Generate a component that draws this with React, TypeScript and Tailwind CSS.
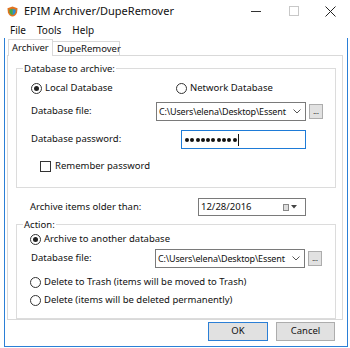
const font = "font-['Noto_Sans','DejaVu_Sans',sans-serif]";

const Radio = ({ checked, label }: { checked?: boolean; label: string }) => (
  <div className="flex items-center h-[14px]">
    <span className="w-[11px] h-[11px] rounded-full border border-[#333] flex items-center justify-center bg-white">
      {checked && <span className="w-[5px] h-[5px] rounded-full bg-[#222]" />}
    </span>
    <span className="ml-[3px] whitespace-nowrap">{label}</span>
  </div>
);

const Combo = () => (
  <div className="flex items-center">
    <div className="w-[150px] h-[19px] border border-[#7a7a7a] bg-white flex items-center pl-[2px] pr-[4px]">
      <span className="flex-1 whitespace-nowrap text-[9px] tracking-[-0.15px]">C:\Users\elena\Desktop\Essent</span>
      <svg width="8" height="5" viewBox="0 0 8 5" className="ml-[2px] shrink-0">
        <path d="M0.5 0.5 L4 4 L7.5 0.5" fill="none" stroke="#555" strokeWidth="1" />
      </svg>
    </div>
    <div className="ml-[3px] w-[14px] h-[15px] border border-[#adadad] bg-[#e1e1e1] flex items-end justify-center pb-[3px]">
      <span className="text-[7px] leading-none">...</span>
    </div>
  </div>
);

const Group = ({ label, children, className }: { label: string; children: React.ReactNode; className?: string }) => (
  <fieldset className={`border border-[#dcdcdc] ml-[8px] w-[320px] ${className ?? ""}`}>
    <legend className="ml-[6px] px-[1px] leading-[13px]">{label}</legend>
    {children}
  </fieldset>
);

const dots = [0, 1, 2, 3, 4, 5, 6, 7, 8, 9];

export default function App() {
  return (
    <div className={`w-[350px] h-[348px] bg-white text-[9.5px] text-[#111] flex flex-col overflow-hidden ${font}`}>
      {/* title bar */}
      <div className="h-[22px] flex items-center">
        <svg width="11" height="11" viewBox="0 0 12 12" className="ml-[7px]">
          <path d="M6 0.5 L11.5 2.5 L11 7 C10 10 8 11 6 11.5 C4 11 2 10 1 7 L0.5 2.5 Z" fill="#e2731f" />
          <path d="M6 3 L9.5 4.2 L9.2 7 C8.5 8.8 7.3 9.5 6 9.8 Z" fill="#2a8fd6" />
          <path d="M6 3 L2.5 4.2 L2.8 7 C3.5 8.8 4.7 9.5 6 9.8 Z" fill="#3cab4a" />
        </svg>
        <span className="ml-[6px] text-[11px]">EPIM Archiver/DupeRemover</span>
        <div className="ml-auto flex items-center">
          <div className="w-[10px] h-[1px] bg-[#333] mr-[28px]" />
          <div className="w-[10px] h-[10px] border border-[#c8c8c8] mr-[26px]" />
          <svg width="11" height="11" viewBox="0 0 11 11" className="mr-[14px]">
            <path d="M0.5 0.5 L10.5 10.5 M10.5 0.5 L0.5 10.5" stroke="#222" strokeWidth="1" />
          </svg>
        </div>
      </div>
      {/* menu */}
      <div className="h-[16px] flex items-center text-[10px] pl-[10px] gap-[11px]">
        <span>File</span>
        <span>Tools</span>
        <span>Help</span>
      </div>
      {/* window body */}
      <div className="ml-[4px] w-[344px] h-[309px] border-x border-b border-[#2b7fd6] flex flex-col">
        <div className="flex items-end pl-[3px] pt-[2px] h-[18px]">
          <div className="relative z-10 h-[17px] w-[45px] border-x border-t border-[#d9d9d9] bg-white pl-[3px] pt-[1px] leading-[13px]">Archiver</div>
          <div className="h-[15px] w-[67px] border-r border-t border-[#d9d9d9] bg-white pl-[4px] leading-[13px]">DupeRemover</div>
        </div>
        <div className="-mt-px ml-[2px] w-[336px] h-[265px] border border-[#d9d9d9] flex flex-col pt-[6px]">
          <Group label="Database to archive:" className="h-[126px]">
            <div className="pl-[14px] flex flex-col">
              <div className="flex mt-[6px]">
                <div className="w-[145px]"><Radio checked label="Local Database" /></div>
                <Radio label="Network Database" />
              </div>
              <div className="flex items-center mt-[7px]">
                <span className="w-[125px]">Database file:</span>
                <Combo />
              </div>
              <div className="flex items-center mt-[9px]">
                <span className="w-[150px]">Database password:</span>
                <div className="w-[125px] h-[19px] border border-[#1e7bd7] bg-white flex items-center pl-[3px]">
                  <div className="flex gap-[1.3px]">
                    {dots.map((d) => (
                      <span key={d} className="w-[4px] h-[4px] rounded-full bg-[#111]" />
                    ))}
                  </div>
                  <span className="w-px h-[12px] bg-[#111] ml-[1px]" />
                </div>
              </div>
              <div className="flex items-center mt-[10px] pl-[9px]">
                <span className="w-[11px] h-[11px] border border-[#333] bg-white" />
                <span className="ml-[4px]">Remember password</span>
              </div>
            </div>
          </Group>
          <div className="flex items-center mt-[10px] pl-[22px]">
            <span className="w-[168px]">Archive items older than:</span>
            <div className="w-[108px] h-[18px] border border-[#7a7a7a] bg-white flex items-center pl-[2px] pr-[8px]">
              <span className="flex-1">12/28/2016</span>
              <span className="w-[6px] h-[7px] border border-[#888] bg-[#ddd]" />
              <svg width="6" height="4" viewBox="0 0 6 4" className="ml-[2px]">
                <path d="M0 0 H6 L3 3.5 Z" fill="#444" />
              </svg>
            </div>
          </div>
          <Group label="Action:" className="h-[101px] mt-[2px]">
            <div className="pl-[13px] flex flex-col">
              <div className="mt-[1px]"><Radio checked label="Archive to another database" /></div>
              <div className="flex items-center mt-[3px]">
                <span className="w-[125px] pl-[1px]">Database file:</span>
                <Combo />
              </div>
              <div className="mt-[7px]"><Radio label="Delete to Trash (items will be moved to Trash)" /></div>
              <div className="mt-[4px]"><Radio label="Delete (items will be deleted permanently)" /></div>
            </div>
          </Group>
        </div>
        <div className="flex justify-end gap-[8px] pr-[12px] mt-[2px]">
          <div className="w-[60px] h-[19px] border border-[#2b7fd6] bg-[#e1e1e1] flex items-center justify-center">OK</div>
          <div className="w-[59px] h-[19px] border border-[#adadad] bg-[#e1e1e1] flex items-center justify-center">Cancel</div>
        </div>
      </div>
    </div>
  );
}
